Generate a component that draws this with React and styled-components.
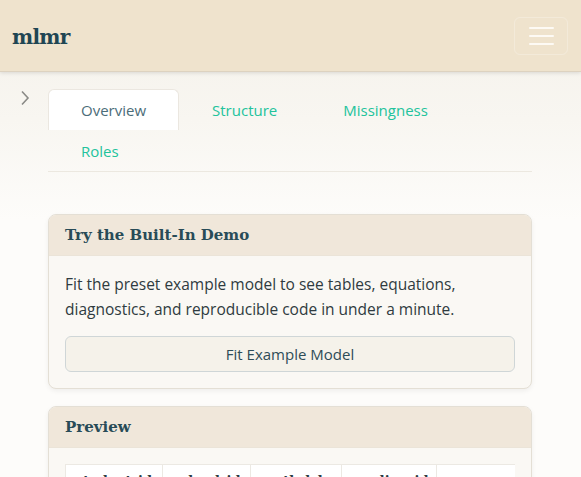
import styled, { createGlobalStyle } from "styled-components";

const GlobalStyle = createGlobalStyle`
  html, body {
    margin: 0;
    padding: 0;
  }
  body {
    font-family: "Open Sans", "Noto Sans", sans-serif;
    background: linear-gradient(180deg, #f4f1ea 0px, #f8f6f1 120px, #fdfcfa 220px, #fdfcfa 100%);
    min-height: 100vh;
    color: #2d3a3f;
  }
`;

const tabs = ["Overview", "Structure", "Missingness", "Roles"];
const columns = [
  { name: "student_id", width: 97 },
  { name: "school_id", width: 88 },
  { name: "math_lvl", width: 91 },
  { name: "reading_id", width: 95 },
  { name: "ses", width: 90 },
];
const tableWidth = columns.reduce((sum, c) => sum + c.width, 0);

export default function App() {
  return (
    <>
      <GlobalStyle />
      <TopBar>
        <Brand>mlmr</Brand>
        <MenuButton aria-label="menu">
          <span />
          <span />
          <span />
        </MenuButton>
      </TopBar>
      <Layout>
        <SideToggle>
          <svg width="10" height="16" viewBox="0 0 10 16" fill="none">
            <path d="M2 1.5 L8 8 L2 14.5" stroke="#8a8a86" strokeWidth="1.6" />
          </svg>
        </SideToggle>
        <Main>
          <TabList>
            {tabs.map((t, i) => (
              <Tab key={t} $active={i === 0}>
                {t}
              </Tab>
            ))}
          </TabList>

          <Card>
            <CardHeader>Try the Built-In Demo</CardHeader>
            <CardBody>
              <Lead>
                Fit the preset example model to see tables, equations,
                diagnostics, and reproducible code in under a minute.
              </Lead>
              <WideButton>Fit Example Model</WideButton>
            </CardBody>
          </Card>

          <Card>
            <CardHeader>Preview</CardHeader>
            <CardBody>
              <TableWrap>
                <Table style={{ width: tableWidth }}>
                  <colgroup>
                    {columns.map((c) => (
                      <col key={c.name} style={{ width: c.width }} />
                    ))}
                  </colgroup>
                  <thead>
                    <tr>
                      {columns.map((c) => (
                        <Th key={c.name}>{c.name}</Th>
                      ))}
                    </tr>
                  </thead>
                </Table>
              </TableWrap>
            </CardBody>
          </Card>
        </Main>
      </Layout>
    </>
  );
}

const TopBar = styled.header`
  height: 72px;
  box-sizing: border-box;
  background: #efe3cd;
  display: flex;
  align-items: center;
  justify-content: space-between;
  padding: 0 13px 0 12px;
  border-bottom: 1px solid #ddd2c0;
  box-shadow: 0 1px 4px rgba(0, 0, 0, 0.12);
  position: relative;
  z-index: 2;
`;

const Brand = styled.div`
  font-family: "DejaVu Serif", Georgia, serif;
  font-weight: 700;
  font-size: 20px;
  color: #1f4653;
  letter-spacing: -0.7px;
  padding-top: 2px;
`;

const MenuButton = styled.button`
  all: unset;
  width: 54px;
  height: 38px;
  box-sizing: border-box;
  border: 1px solid rgba(255, 255, 255, 0.25);
  border-radius: 6px;
  display: flex;
  flex-direction: column;
  align-items: center;
  justify-content: center;
  gap: 6px;

  span {
    display: block;
    width: 25px;
    height: 2px;
    border-radius: 1px;
    background: #fdfaf4;
  }
`;

const Layout = styled.div`
  display: flex;
  padding: 17px 49px 0 20px;
`;

const SideToggle = styled.div`
  width: 28px;
  flex-shrink: 0;
`;

const Main = styled.main`
  flex: 1;
  min-width: 0;
  display: flex;
  flex-direction: column;
  gap: 17px;
`;

const TabList = styled.nav`
  display: flex;
  flex-wrap: wrap;
  border-bottom: 1px solid #ece8e0;
  margin-bottom: 25px;
`;

const Tab = styled.a`
  display: block;
  padding: 10px 32px 9px;
  font-size: 15px;
  line-height: 21px;
  color: ${(p) => (p.$active ? "#4c6d79" : "#22c39c")};
  background: ${(p) => (p.$active ? "#ffffff" : "transparent")};
  border: 1px solid ${(p) => (p.$active ? "#ebe7e0" : "transparent")};
  border-bottom: none;
  border-radius: 6px 6px 0 0;
  cursor: pointer;
`;

const Card = styled.section`
  border: 1px solid #e4dfd5;
  border-radius: 8px;
  overflow: hidden;
  background: #faf8f4;
  box-shadow: 0 2px 5px rgba(0, 0, 0, 0.06);
`;

const CardHeader = styled.h2`
  margin: 0;
  padding: 10px 16px 10px;
  background: #f0e7da;
  border-bottom: 1px solid #ebe4d8;
  font-family: "DejaVu Serif", Georgia, serif;
  font-weight: 700;
  font-size: 15px;
  line-height: 20px;
  color: #284b57;
`;

const CardBody = styled.div`
  padding: 16px;
`;

const Lead = styled.p`
  margin: 0 0 14px;
  font-size: 15.5px;
  line-height: 25px;
  color: #2f3b40;
`;

const WideButton = styled.button`
  all: unset;
  box-sizing: border-box;
  display: block;
  width: 100%;
  height: 36px;
  text-align: center;
  font-size: 15px;
  color: #2e4c57;
  background: #f5f2ea;
  border: 1px solid #cfd6d7;
  border-radius: 6px;
  cursor: pointer;
`;

const TableWrap = styled.div`
  overflow: hidden;
`;

const Table = styled.table`
  border-collapse: collapse;
  table-layout: fixed;
  background: #ffffff;
`;

const Th = styled.th`
  padding: 8px 10px 10px;
  border: 1px solid #ece9e3;
  font-family: "DejaVu Serif", Georgia, serif;
  font-size: 13px;
  font-weight: 700;
  color: #2a3a40;
  white-space: nowrap;
  overflow: hidden;
  text-align: left;
`;
